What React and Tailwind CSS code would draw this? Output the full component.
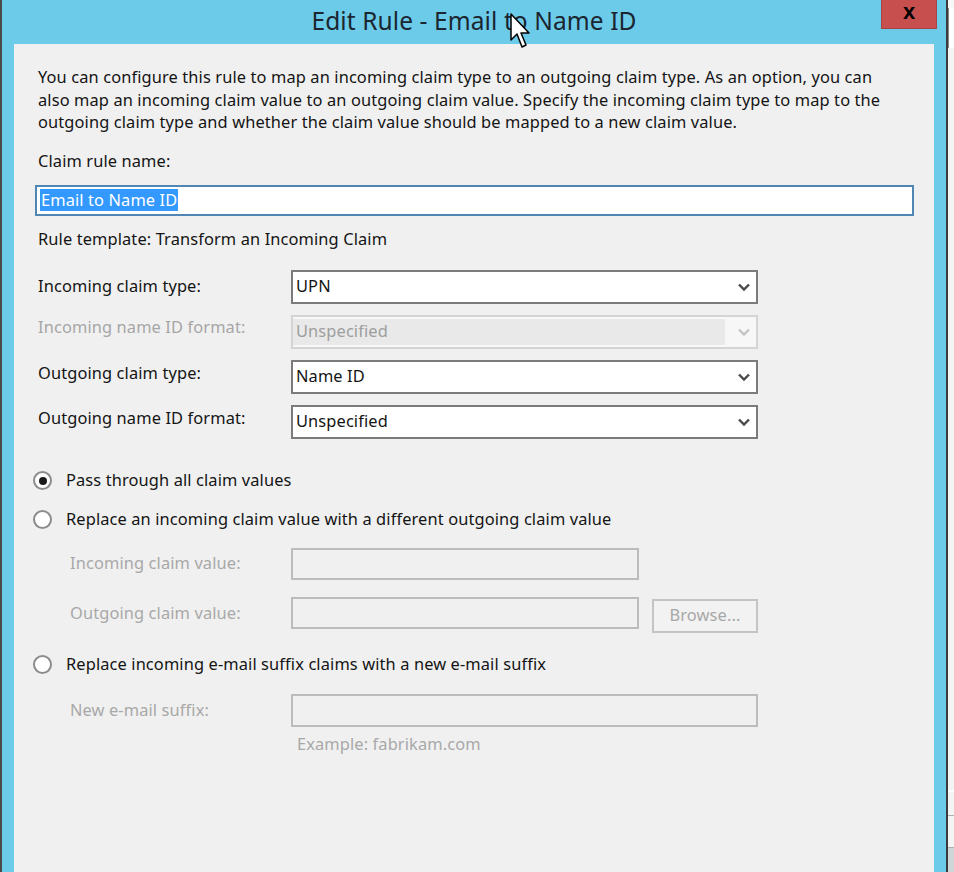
import React from "react";

const font = { fontFamily: '"Noto Sans", "Open Sans", sans-serif' };

function Chevron({ disabled }) {
  return (
    <svg width="14" height="10" viewBox="0 0 14 10" className="shrink-0">
      <polyline
        points="2,2.5 7,7.5 12,2.5"
        fill="none"
        stroke={disabled ? "#c4c4c4" : "#4a4a4a"}
        strokeWidth="2.4"
      />
    </svg>
  );
}

function Select({ value, disabled }) {
  if (disabled) {
    return (
      <div className="w-[467px] h-[34px] border-2 border-[#d4d4d4] bg-[#f7f7f7] flex items-center pr-[5px]">
        <div className="h-[26px] w-[432px] bg-[#e9e9e9] flex items-center pl-[3px] text-[#9e9e9e]">
          {value}
        </div>
        <div className="flex-1" />
        <Chevron disabled />
      </div>
    );
  }
  return (
    <div className="w-[467px] h-[34px] border-2 border-[#7b7b7b] bg-white flex items-center pl-[3px] pr-[5px]">
      <span className="flex-1 text-[#141414]">{value}</span>
      <Chevron />
    </div>
  );
}

function Radio({ checked, label }) {
  return (
    <div className="flex items-center h-[22px]">
      <div className="w-[19px] h-[19px] rounded-full border-2 border-[#8c8c8c] bg-white flex items-center justify-center mr-[14px]">
        {checked && <div className="w-[8px] h-[8px] rounded-full bg-[#1a1a1a]" />}
      </div>
      <span className="text-[#141414]">{label}</span>
    </div>
  );
}

export default function App() {
  return (
    <div className="w-[954px] h-[872px] overflow-hidden flex bg-[#6ccbe9] relative" style={font}>
      <div className="w-[2px] bg-[#4a4a4a]" />
      <div className="w-[944px] flex flex-col">
        {/* title bar */}
        <div className="h-[44px] grid grid-cols-[1fr_auto_1fr] items-start">
          <div />
          <div className="pt-[3px] text-[24.5px] text-[#1b2630] tracking-[0.1px]">
            Edit Rule - Email to Name ID
          </div>
          <div className="flex justify-end pr-[9px]">
            <div className="w-[56px] h-[29px] bg-[#c7504f] border border-[#a84343] border-t-0 flex items-center justify-center">
              <span className="text-[22px] font-bold text-black leading-none -mt-[4px]" style={{ fontFamily: '"Liberation Sans", sans-serif' }}>x</span>
            </div>
          </div>
        </div>
        {/* client area */}
        <div className="flex-1 mx-[12px] bg-[#f0f0f0] pl-[24px] pt-[22px] text-[#141414] text-[16.4px] tracking-[0.12px]">
          <p className="leading-[22.5px] w-[860px]">
            You can configure this rule to map an incoming claim type to an outgoing claim type. As an option, you can also map an incoming claim value to an outgoing claim value. Specify the incoming claim type to map to the outgoing claim type and whether the claim value should be mapped to a new claim value.
          </p>
          <div className="mt-[16px] leading-[22px]">Claim rule name:</div>
          <div className="mt-[13px] -ml-[3px] w-[879px] h-[31px] border-2 border-[#4f86b3] bg-white flex items-center pl-[3px]">
            <span className="bg-[#3399ff] text-white leading-[22px] px-[1px]">Email to Name ID</span>
          </div>
          <div className="mt-[12px] leading-[22px]">Rule template: Transform an Incoming Claim</div>

          <div className="mt-[20px] flex flex-col gap-[11px]">
            <div className="flex items-start">
              <div className="w-[253px] pt-[4px]">Incoming claim type:</div>
              <Select value="UPN" />
            </div>
            <div className="flex items-start">
              <div className="w-[253px] text-[#a6a6a6]">Incoming name ID format:</div>
              <Select value="Unspecified" disabled />
            </div>
            <div className="flex items-start">
              <div className="w-[253px] pt-[1px]">Outgoing claim type:</div>
              <Select value="Name ID" />
            </div>
            <div className="flex items-start">
              <div className="w-[253px] pt-[1px]">Outgoing name ID format:</div>
              <Select value="Unspecified" />
            </div>
          </div>

          <div className="mt-[31px] -ml-[5px]">
            <Radio checked label="Pass through all claim values" />
            <div className="mt-[17px]">
              <Radio label="Replace an incoming claim value with a different outgoing claim value" />
            </div>
          </div>

          <div className="mt-[17px] flex flex-col gap-[17px]">
            <div className="flex items-center">
              <div className="w-[253px] pl-[32px] text-[#a8a8a8]">Incoming claim value:</div>
              <div className="w-[348px] h-[32px] border-2 border-[#bcbcbc]" />
            </div>
            <div className="flex items-start">
              <div className="w-[253px] pl-[32px] text-[#a8a8a8] pt-[4px]">Outgoing claim value:</div>
              <div className="w-[348px] h-[32px] border-2 border-[#bcbcbc]" />
              <div className="ml-[13px] mt-[2px] w-[106px] h-[34px] border-2 border-[#c4c4c4] bg-[#f2f2f2] flex items-center justify-center text-[#a8a8a8]">
                Browse...
              </div>
            </div>
          </div>

          <div className="mt-[21px] -ml-[5px]">
            <Radio label="Replace incoming e-mail suffix claims with a new e-mail suffix" />
          </div>

          <div className="mt-[18px] flex items-center">
            <div className="w-[253px] pl-[32px] text-[#a8a8a8]">New e-mail suffix:</div>
            <div className="w-[467px] h-[33px] border-2 border-[#bcbcbc]" />
          </div>
          <div className="mt-[5px] ml-[259px] text-[#a8a8a8]">Example: fabrikam.com</div>
        </div>
      </div>
      <div className="w-[2px] bg-[#3a3a3a]" />
      <div className="flex-1 bg-[#f4f4f4] flex flex-col">
        <div className="h-[8px] bg-[#f8f8f8]" />
        <div className="h-[40px] border-l border-[#8a8a8a] bg-white" />
        <div className="flex-1" />
        <div className="h-[2px] bg-white mb-[2px]" />
        <div className="h-[22px] border-b border-[#b0b0b0]" />
        <div className="h-[32px] border-b border-[#b0b0b0]" />
        <div className="h-[24px] bg-[#cfd6da]" />
      </div>

      {/* mouse cursor */}
      <svg className="absolute left-[510px] top-[13px]" width="24" height="38" viewBox="0 0 24 38">
        <path d="M1 1 L1 27 L7 21 L12 34 L16 32 L11 20 L19 20 Z" fill="white" stroke="black" strokeWidth="1.5" strokeLinejoin="round" />
      </svg>
    </div>
  );
}
